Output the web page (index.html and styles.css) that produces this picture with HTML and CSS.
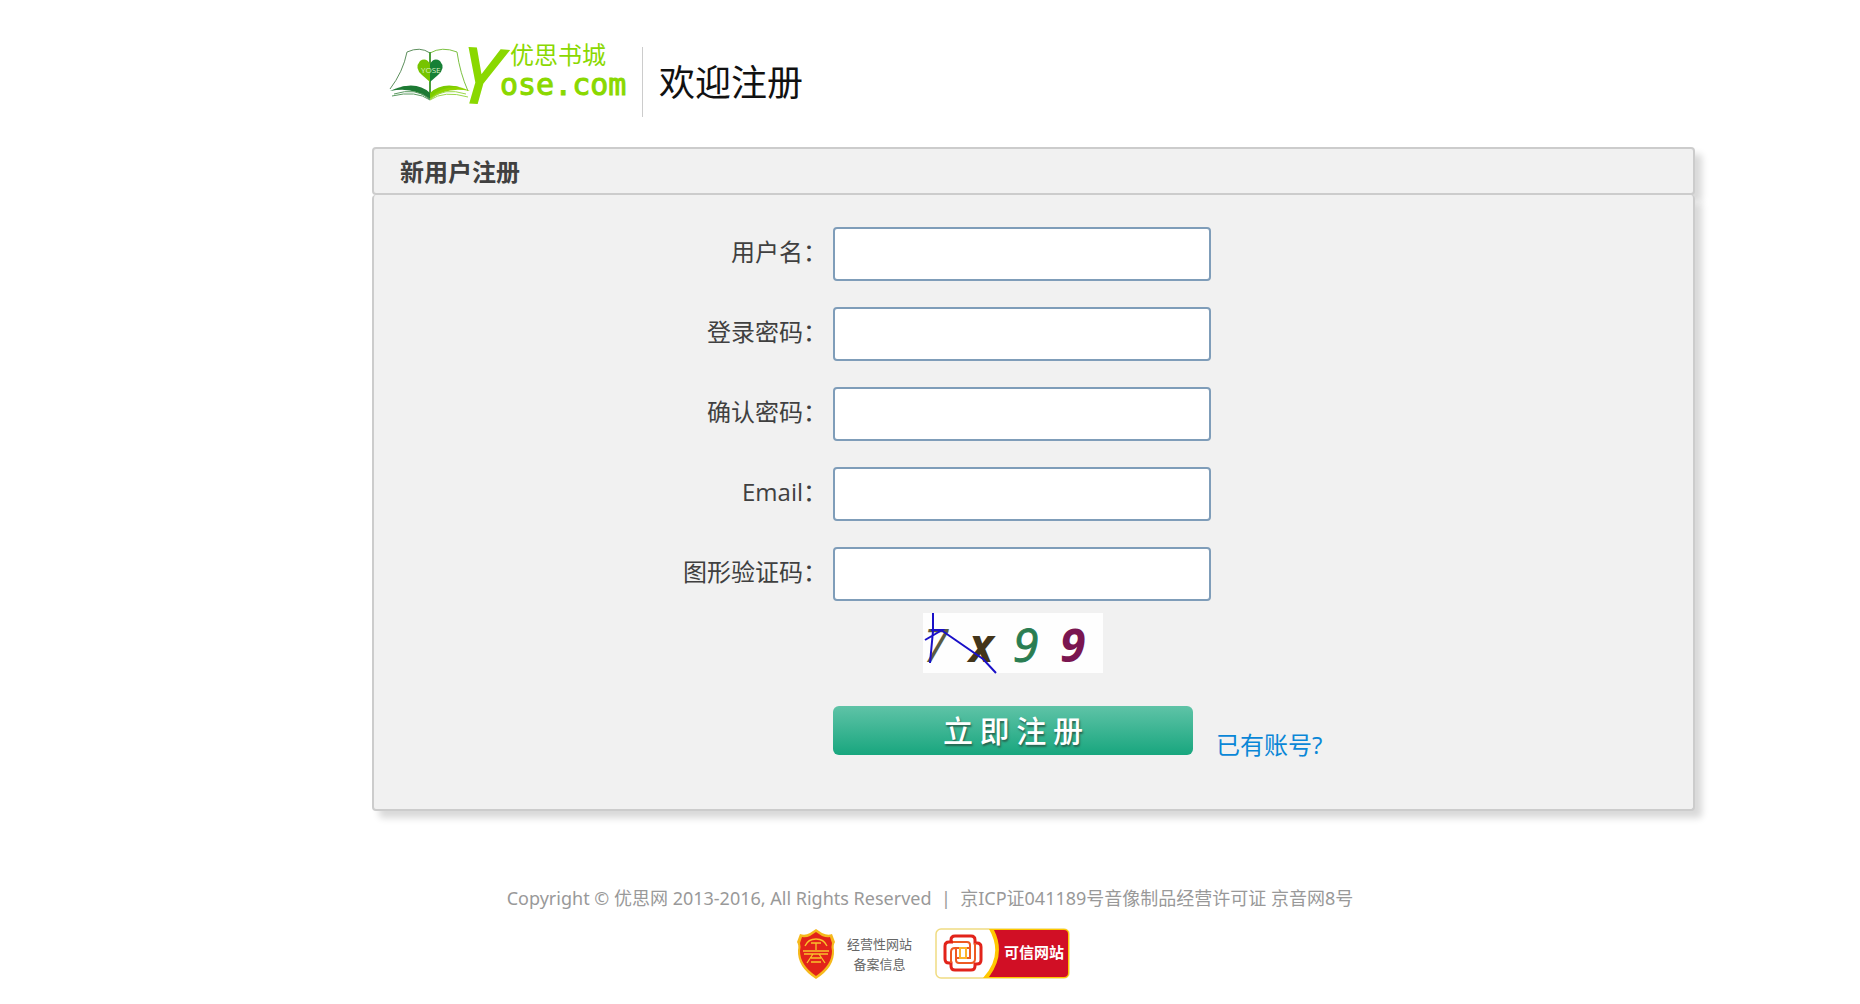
FILE: index.html
```html
<!DOCTYPE html>
<html lang="zh-CN">
<head>
    <meta charset="UTF-8">
    <title>欢迎注册</title>
    <link rel="stylesheet" href="styles.css">
</head>
<body>
<div class="header">
    <a class="logo" href="#">
        <svg width="244" height="80" viewBox="0 0 244 80">
            <!--书-->
            <g transform="translate(0 -9)">
                <path d="M21 31Q34 25 44 32Q56 26 71 31L82 70Q60 62 44 76Q26 62 4 70Z" fill="#fff"/>
                <path d="M44 32Q34 25 21 31Q17 51 4 68" fill="none" stroke="#5d8f5d" stroke-width="1"/>
                <path d="M44 32Q56 25 71 31Q74 52 82 70" fill="none" stroke="#7cc142" stroke-width="1"/>
                <path d="M44 31V78" stroke="#4c9e3c" stroke-width="2"/>
                <path d="M4 70Q30 58 44 75V79Q28 65 4 70Z" fill="#1d7a33"/>
                <path d="M10 67Q32 60 44 72V77Q30 63 10 67Z" fill="#1d7a33"/>
                <path d="M6 75Q30 69 44 79M8 73Q30 66 44 78" fill="none" stroke="#5a9a60"/>
                <path d="M84 70Q58 58 44 75V79Q60 65 84 70Z" fill="#8fd400"/>
                <path d="M78 67Q56 60 44 72V77Q58 63 78 67Z" fill="#7ccb00"/>
                <path d="M82 76Q58 69 44 79M80 73Q58 66 44 78" fill="none" stroke="#9bd84a"/>
                <!--心-->
                <path d="M44 43Q40 36 34 40Q28 47 36 54L44 61Z" fill="#76c400"/>
                <path d="M44 43Q48 36 54 40Q60 47 52 54L44 61Z" fill="#168036"/>
                <text class="logo-heart" x="35" y="52">YOSE</text>
            </g>
            <text class="logo-y" x="73" y="73" transform="rotate(4 92 73)">Y</text>
            <text class="logo-cn" x="124" y="34">优思书城</text>
            <text class="logo-en" x="114" y="65">ose.com</text>
        </svg>
    </a>
    <h1>欢迎注册</h1>
</div>
<div class="main">
    <h2>新用户注册</h2>
    <form class="reg">
        <div class="row">
            <label for="user">用户名：</label>
            <input type="text" id="user">
        </div>
        <div class="row">
            <label for="pwd">登录密码：</label>
            <input type="password" id="pwd">
        </div>
        <div class="row">
            <label for="pwd2">确认密码：</label>
            <input type="password" id="pwd2">
        </div>
        <div class="row">
            <label for="email">Email：</label>
            <input type="text" id="email">
        </div>
        <div class="row">
            <label for="code">图形验证码：</label>
            <input type="text" id="code">
        </div>
        <div class="captcha">
            <svg width="180" height="60" viewBox="0 0 180 60">
                <rect width="180" height="60" fill="#fefefe"/>
                <text x="0" y="49" class="c1">7</text>
                <text x="46" y="49" class="c2">x</text>
                <text x="90" y="49" class="c3">9</text>
                <text x="137" y="49" class="c4">9</text>
                <path d="M10 0V18L7 50M2 27L19 17L8 17M18 17L60 46L73 60" fill="none" stroke="#1a10c8" stroke-width="2"/>
            </svg>
        </div>
        <div class="submit">
            <button type="button">立 即 注 册</button>
            <a href="#">已有账号?</a>
        </div>
    </form>
</div>
<div class="footer">
    <p>Copyright © 优思网 2013-2016, All Rights Reserved &nbsp;|&nbsp; 京ICP证041189号音像制品经营许可证 京音网8号</p>
    <div class="badges">
        <a class="record" href="#">
            <svg width="38" height="50" viewBox="0 0 38 50">
                <path d="M19 0L25 4Q31 7 35 5L38 13Q36 16 37 21Q38 38 19 50Q0 38 1 21Q2 16 0 13L3 5Q8 7 13 4Z" fill="#f6b91c"/>
                <path d="M19 3L25 7Q30 9 33 8L35 14Q34 17 35 22Q35 36 19 47Q3 36 3 22Q4 17 3 14L5 8Q9 9 13 7Z" fill="#e2231a"/>
                <path d="M8 17Q11 10 19 10Q27 10 30 17M14 14H24M19 14V21M6 22H32M7 25H31M16 25L10 34M22 25L28 34M14 29H24M14 33H24" fill="none" stroke="#f9c22b" stroke-width="1.3"/>
            </svg>
            <span>经营性网站<br>备案信息</span>
        </a>
        <a class="trust" href="#">
            <svg width="135" height="51" viewBox="0 0 135 51">
                <rect x="1" y="1" width="133" height="49" rx="5" fill="#fff" stroke="#f0dc82" stroke-width="1.5"/>
                <path d="M54 1H129Q134 1 134 6V45Q134 50 129 50H48Q69 27 54 1Z" fill="#ffc800"/>
                <path d="M59 2H129Q133 2 133 6V45Q133 49 129 49H54Q71 26 59 2Z" fill="#d10f25"/>
                <!--回形结-->
                <g fill="none" stroke-width="3">
                    <path d="M18 14H14Q10 14 10 18V31Q10 35 14 35H16V38Q16 42 20 42H36Q40 42 40 38V36H42Q46 36 46 32V19Q46 15 42 15H40V12Q40 8 36 8H20Q16 8 16 12V14" stroke="#e2231a"/>
                    <path d="M18 14H32Q35 14 35 17V31M40 15V31Q40 35 36 35H24Q21 35 21 32V19M16 35V24Q16 20 20 20H35M21 30H36" stroke="#ee5a22" stroke-width="2"/>
                    <path d="M25 20H31V30H25Z" stroke="#fbb52a" stroke-width="2"/>
                </g>
                <text x="69" y="30">可信网站</text>
            </svg>
        </a>
    </div>
</div>
</body>
</html>
```
FILE: styles.css
```css
* {
    padding: 0;
    margin: 0;
    box-sizing: border-box;
}

body {
    font-family: "Open Sans", "Noto Sans CJK SC", sans-serif;
    font-size: 24px;
    color: #404040;
    background: #fff;
}

a {
    text-decoration: none;
    color: #0a87d7;
}

svg {
    display: block;
    overflow: visible;
}

/*头部*/
.header {
    display: flex;
    margin-left: 20%;
    padding: 30px 0 31px 14px;
    height: 147px;
}

.logo {
    width: 256px;
}

.logo-heart {
    font-size: 8px;
    fill: #d9f2c0;
}

.logo-y {
    font-family: "Open Sans", sans-serif;
    font-size: 76px;
    font-style: italic;
    fill: #8ad800;
    stroke: #8ad800;
    stroke-width: 2px;
}

.logo-cn {
    font-family: "Noto Sans CJK SC", sans-serif;
    font-size: 24px;
    fill: #8ad800;
}

.logo-en {
    font-family: "DejaVu Sans Mono", monospace;
    font-size: 30px;
    fill: #8ad800;
    stroke: #8ad800;
}

.header h1 {
    margin-top: 17px;
    padding-left: 16px;
    height: 70px;
    line-height: 72px;
    border-left: 1px solid #ccc;
    font-size: 36px;
    font-weight: normal;
    color: #111;
}

/*注册框*/
.main {
    margin: 0 165px 0 20%;
}

.main h2 {
    height: 48px;
    line-height: 46px;
    padding-left: 26px;
    border: 2px solid #ccc;
    border-radius: 4px;
    background: #f1f1f1;
    box-shadow: 7px 7px 7px #d9d9d9;
    font-size: 24px;
}

.reg {
    padding: 32px 0 54px;
    border: 2px solid #ccc;
    border-top: 0;
    border-radius: 4px;
    background: #f1f1f1;
    box-shadow: 7px 7px 7px #d9d9d9;
}

.row {
    display: flex;
    margin-bottom: 26px;
}

.row label {
    width: 459px;
    padding-right: 6px;
    line-height: 50px;
    text-align: right;
}

.row input {
    width: 378px;
    height: 54px;
    padding: 0 10px;
    border: 2px solid #7f9db9;
    border-radius: 4px;
    background: #fff;
    font-size: 24px;
}

.captcha {
    margin: -14px 0 33px 549px;
}

.c1, .c2, .c3, .c4 {
    font-family: "Open Sans", sans-serif;
    font-style: italic;
    font-size: 46px;
}

.c1 {
    fill: #5b5b40;
}

.c2 {
    font-weight: bold;
    fill: #43351a;
}

.c3 {
    fill: #2a7d52;
    stroke: #2a7d52;
}

.c4 {
    font-weight: bold;
    fill: #7a1650;
}

.submit {
    display: flex;
    margin-left: 459px;
}

.submit button {
    width: 360px;
    height: 49px;
    border: 0;
    border-radius: 6px;
    background: linear-gradient(#5fc3a7, #18a67e);
    color: #fff;
    font-family: "Noto Sans CJK SC", sans-serif;
    font-size: 30px;
    font-weight: 500;
    text-shadow: 1px 2px 2px #27634f;
    line-height: 44px;
    padding-bottom: 3px;
    cursor: pointer;
}

.submit a {
    margin-left: 23px;
    padding-top: 14px;
    line-height: 50px;
    height: 49px;
}

/*底部*/
.footer {
    padding-top: 74px;
    text-align: center;
}

.footer p {
    line-height: 26px;
    font-family: "Noto Sans", "Noto Sans CJK SC", sans-serif;
    font-size: 18px;
    color: #999;
}

.badges {
    display: flex;
    justify-content: center;
    gap: 23px;
    margin-top: 17px;
    padding-left: 7px;
}

.record {
    display: flex;
    align-items: center;
    gap: 12px;
    font-size: 13px;
    line-height: 20px;
    color: #666;
}

.trust text {
    font-size: 15px;
    font-weight: bold;
    fill: #fff;
}
```
